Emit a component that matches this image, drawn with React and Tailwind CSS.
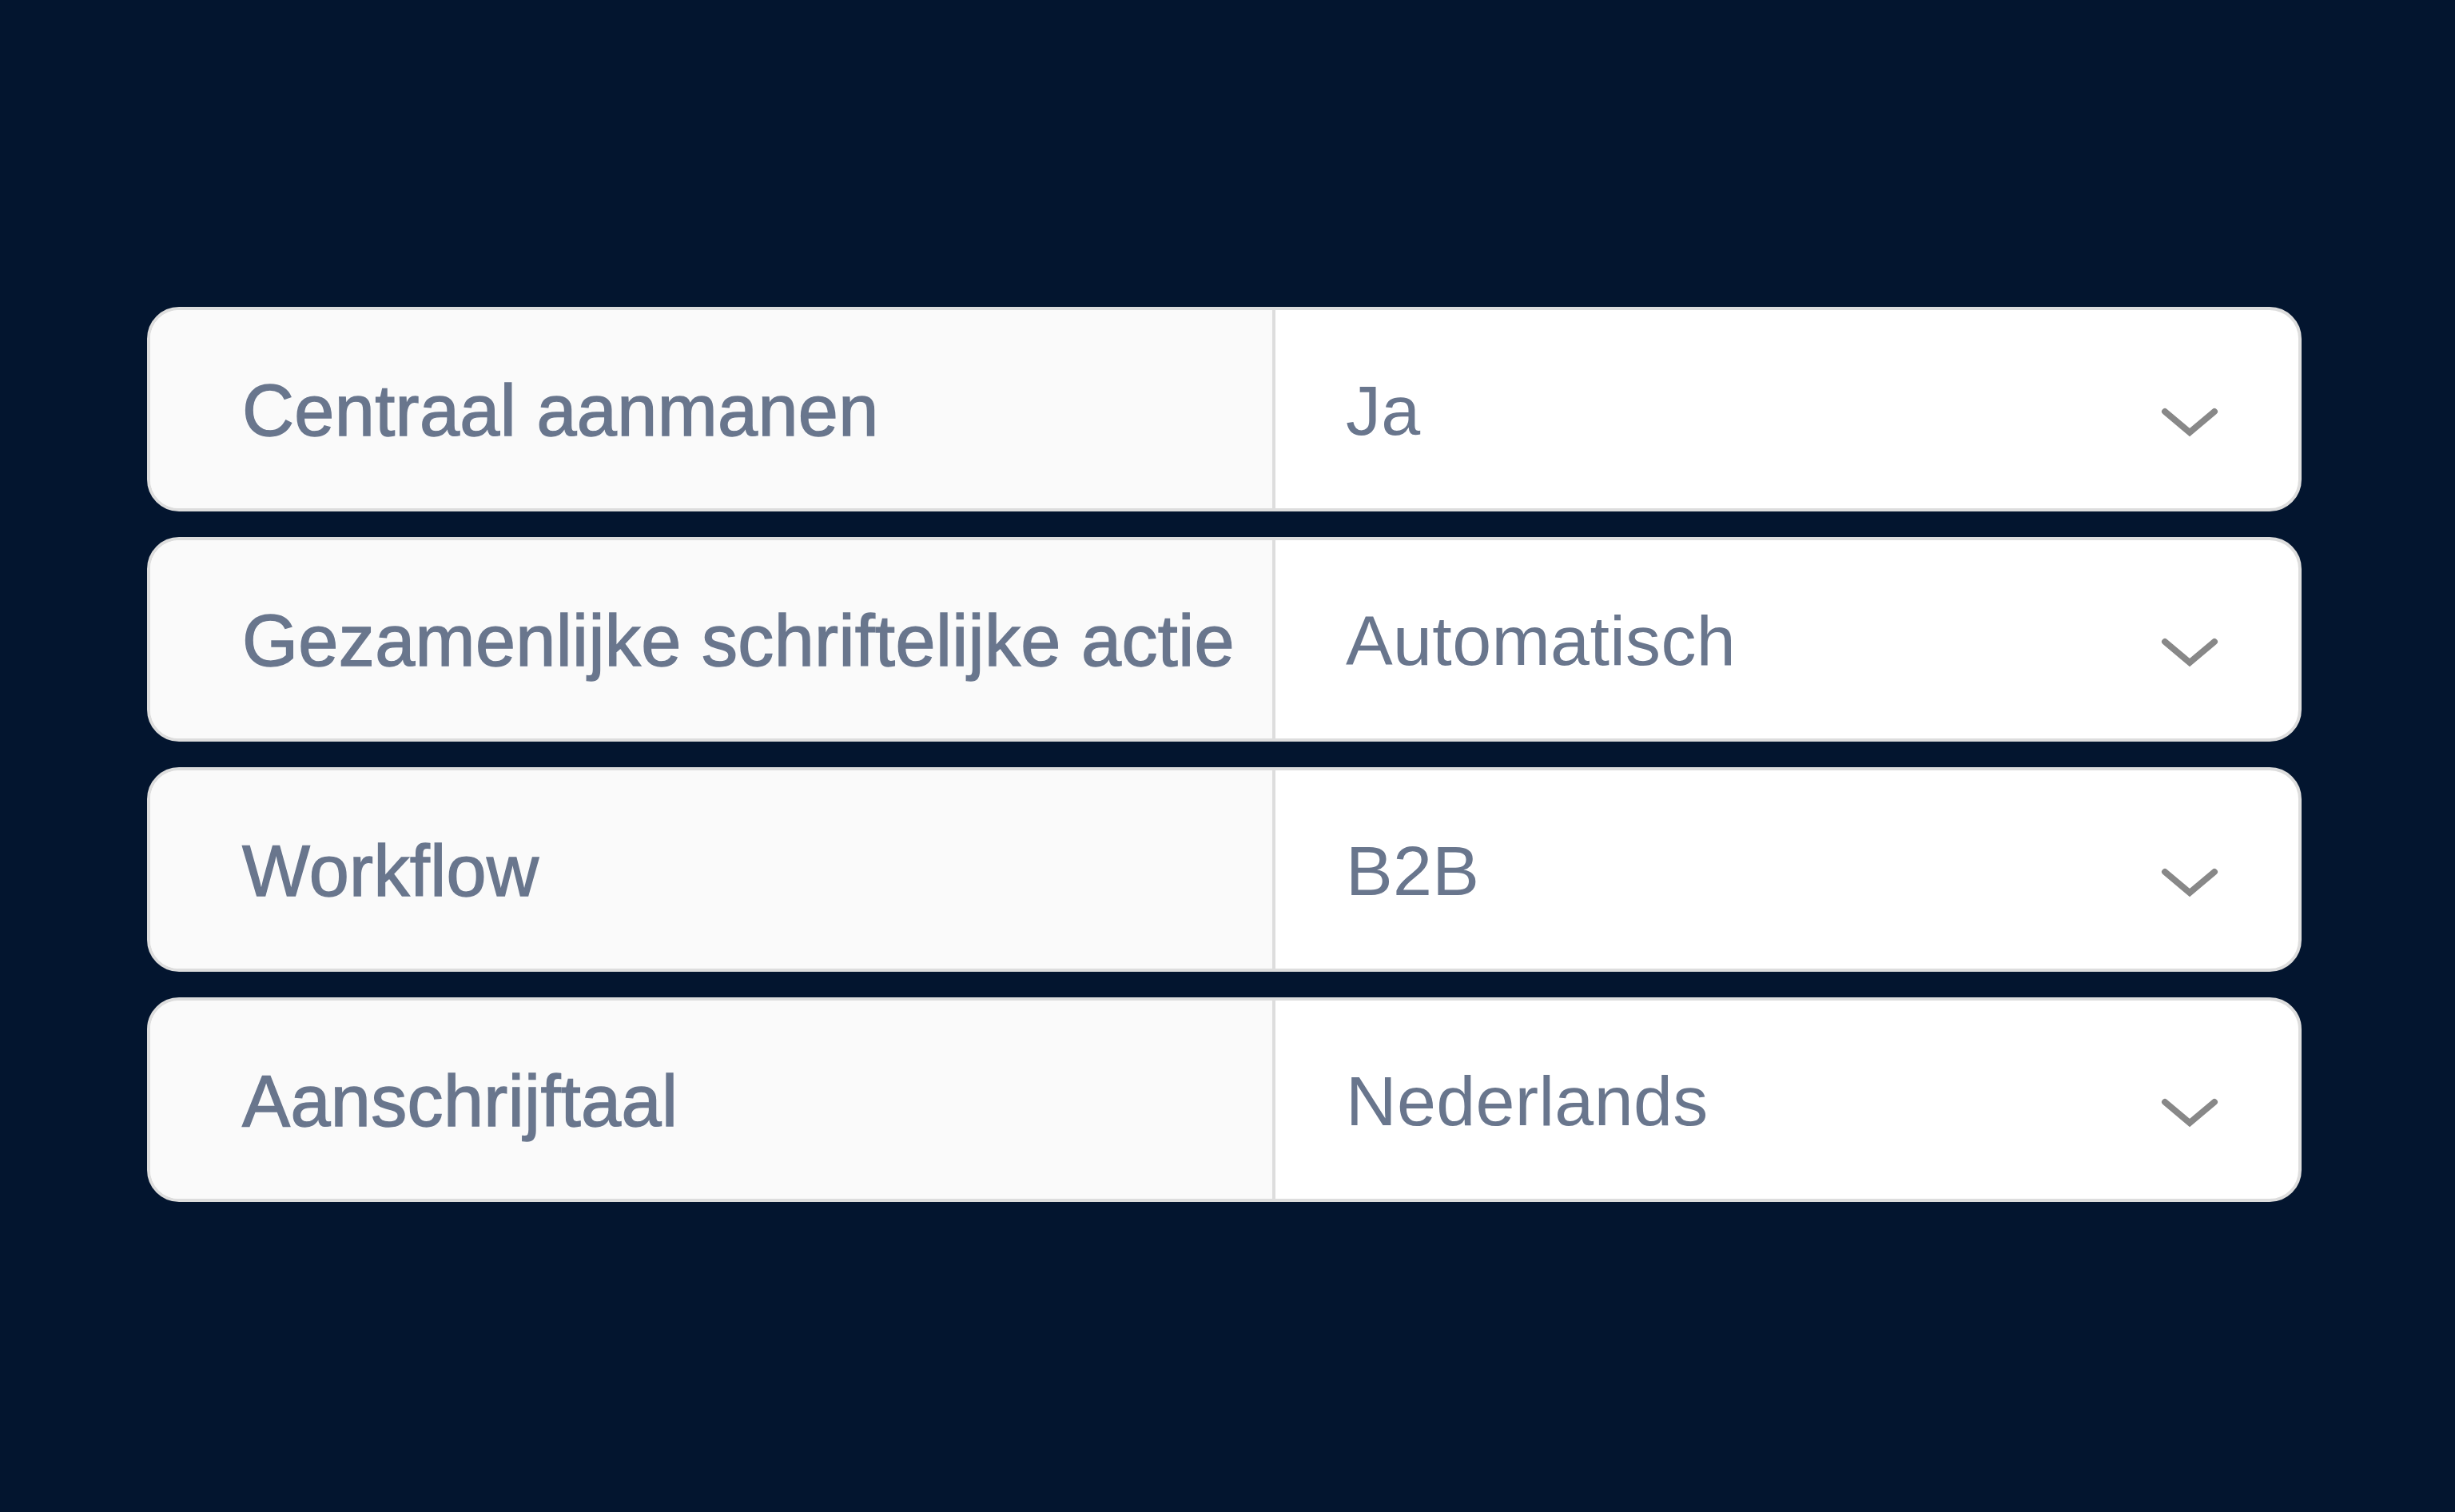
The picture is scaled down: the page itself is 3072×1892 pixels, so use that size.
const rows = [
  { label: "Centraal aanmanen", value: "Ja" },
  { label: "Gezamenlijke schriftelijke actie", value: "Automatisch" },
  { label: "Workflow", value: "B2B" },
  { label: "Aanschrijftaal", value: "Nederlands" },
];

const Chevron = () => (
  <svg
    width="72"
    height="40"
    viewBox="0 0 72 40"
    fill="none"
    className="mt-[32px] shrink-0"
  >
    <path
      d="M5 5 L36 31 L67 5"
      stroke="#888888"
      strokeWidth="8"
      strokeLinecap="round"
      strokeLinejoin="miter"
    />
  </svg>
);

const SettingRow = ({ label, value }) => (
  <div className="flex h-[256px] overflow-hidden rounded-[40px] border-[4px] border-[#dddddd] bg-white">
    <div className="flex w-[1404px] shrink-0 items-center bg-[#fafafa] pl-[115px] pt-[4px]">
      <span className="text-[90px] tracking-[0.004em] text-[#69768d] [-webkit-text-stroke:1.4px_#69768d]">
        {label}
      </span>
    </div>
    <div className="w-[4px] shrink-0 bg-[#dddddd]" />
    <div className="flex flex-1 items-center justify-between pl-[88px] pr-[100px] pt-[4px]">
      <span className="text-[88px] tracking-[0.004em] text-[#69768d]">
        {value}
      </span>
      <Chevron />
    </div>
  </div>
);

export default function App() {
  return (
    <div
      className="h-[1892px] w-[3072px] bg-[#03152f] pl-[184px] pt-[384px]"
      style={{ fontFamily: '"Liberation Sans", Arial, sans-serif' }}
    >
      <div className="flex w-[2696px] flex-col gap-[32px]">
        {rows.map((row) => (
          <SettingRow key={row.label} label={row.label} value={row.value} />
        ))}
      </div>
    </div>
  );
}
